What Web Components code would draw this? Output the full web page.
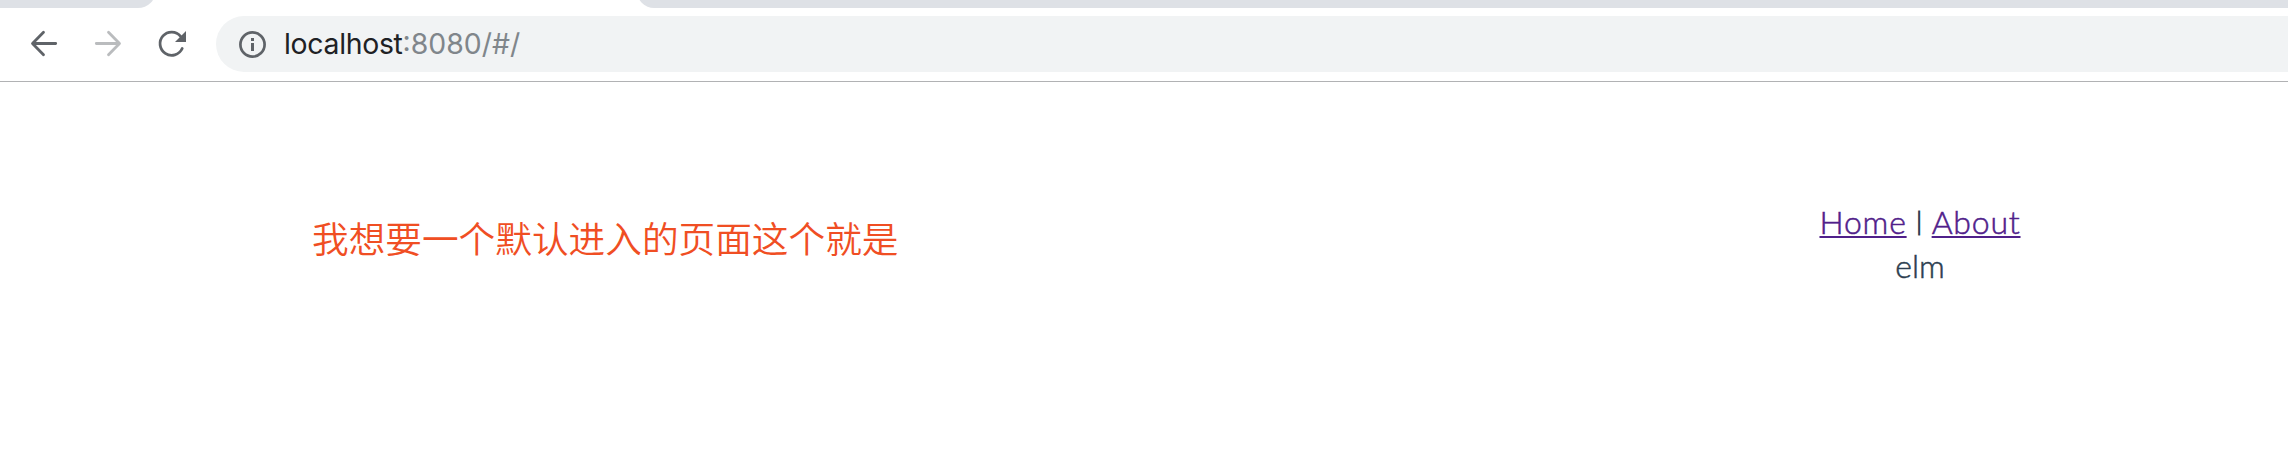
<!DOCTYPE html>
<html lang="zh">
<head>
<meta charset="utf-8">
<title>localhost</title>
<style>
html,body{margin:0;height:100%;background:#fff;overflow:hidden}
</style>
</head>
<body>
<browser-window></browser-window>
<script>
const define = (name, html) => customElements.define(name, class extends HTMLElement {
  constructor() {
    super();
    const t = document.createElement('template');
    t.innerHTML = html;
    this.attachShadow({mode: 'open'}).append(t.content.cloneNode(true));
  }
});

define('tab-strip', `
<style>
:host{display:flex;justify-content:space-between;height:8px;overflow:hidden;background:#fff}
div{height:24px;margin-top:-16px;background:#dee1e6}
.left{width:156px;border-bottom-right-radius:18px}
.right{width:1651px;border-bottom-left-radius:17px}
</style>
<div class="left"></div><div class="right"></div>`);

define('nav-buttons', `
<style>
:host{display:flex;gap:24px;padding-left:24px;width:192px;box-sizing:border-box}
svg{width:40px;height:40px;flex:none}
</style>
<svg viewBox="0 0 40 40" fill="none" stroke="#5f6368" stroke-width="2.8" stroke-linecap="round" stroke-linejoin="round"><path d="M31.7 19.5H9M19.5 8.2L8.5 19.5L19.5 30.8"/></svg>
<svg viewBox="0 0 40 40" fill="none" stroke="#babcbe" stroke-width="2.8" stroke-linecap="round" stroke-linejoin="round"><path d="M8.3 19.5H31M20.5 8.2L31.5 19.5L20.5 30.8"/></svg>
<svg viewBox="0 0 40 40" fill="none" stroke="#5f6368" stroke-width="2.8" stroke-linecap="round"><path d="M30.2 24.5A11.6 11.6 0 1 1 28.6 12.3"/><path d="M34 7V18H23Z" fill="#5f6368" stroke="none"/></svg>`);

define('address-bar', `
<style>
:host{display:flex;align-items:center;flex:1;height:56px;margin-left:24px;padding-left:22px;background:#f1f3f4;border-radius:28px 0 0 28px;box-sizing:border-box;font:28.4px/56px Inter,sans-serif;color:#202124;white-space:nowrap}
svg{width:28px;height:28px;margin-right:18px;flex:none}
.host{letter-spacing:-.3px}
.rest{color:#80868b}
</style>
<svg viewBox="0 0 28 28"><circle cx="14.5" cy="14.5" r="12.1" fill="none" stroke="#5f6368" stroke-width="2.7"/><path d="M13 8h3v3h-3zM13 13h3v8h-3z" fill="#5f6368"/></svg>
<span class="host"><slot name="host"></slot></span><span class="rest"><slot name="rest"></slot></span>`);

define('tool-bar', `
<style>
:host{display:flex;align-items:center;height:74px;border-bottom:1px solid #b1b2b4;box-sizing:border-box;padding-bottom:1px}
</style>
<slot></slot>`);

define('page-note', `
<style>
:host{display:block;font:36.67px/54px "Noto Sans CJK SC",sans-serif;font-weight:350;color:#f04e23;white-space:nowrap;margin:128px 0 0 312px}
</style>
<slot></slot>`);

define('app-view', `
<style>
:host{display:block;width:260px;margin:118px 238px 0 0;text-align:center;font:32px/44px Lato,sans-serif;font-weight:300;color:#2c3e50;white-space:nowrap;-webkit-text-stroke:.5px currentColor}
nav{display:flex;justify-content:center}
a{color:#50208a;text-decoration:underline;text-decoration-thickness:2px;text-underline-offset:2px;text-decoration-skip-ink:none;letter-spacing:.8px}
.bar{width:25px;font-size:26px;line-height:40px;-webkit-text-stroke-width:.9px}
</style>
<nav><a href="#/"><slot name="home"></slot></a><span class="bar">|</span><a href="#/about"><slot name="about"></slot></a></nav>
<div><slot></slot></div>`);

define('browser-window', `
<style>
:host{display:block}
main{display:flex;justify-content:space-between;align-items:flex-start}
</style>
<tab-strip></tab-strip>
<tool-bar><nav-buttons></nav-buttons><address-bar><span slot="host">localhost</span><span slot="rest">:8080/#/</span></address-bar></tool-bar>
<main>
<page-note>我想要一个默认进入的页面这个就是</page-note>
<app-view><span slot="home">Home</span><span slot="about">About</span>elm</app-view>
</main>`);
</script>
</body>
</html>
